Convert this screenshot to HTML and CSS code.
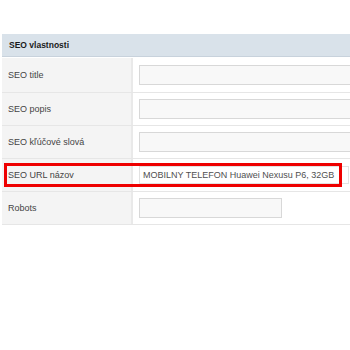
FILE: index.html
```html
<!DOCTYPE html>
<html lang="sk">
<head>
    <meta charset="UTF-8">
    <title>SEO vlastnosti</title>
    <link rel="stylesheet" href="styles.css">
</head>
<body>
    <div class="panel">
        <div class="panel-head">SEO vlastnosti</div>

        <div class="prop-row prop-row-first">
            <div class="prop-label">SEO title</div>
            <div class="prop-value"><input class="field field-wide" type="text"></div>
        </div>
        <div class="prop-row">
            <div class="prop-label">SEO popis</div>
            <div class="prop-value"><input class="field field-wide" type="text"></div>
        </div>
        <div class="prop-row">
            <div class="prop-label">SEO kľúčové slová</div>
            <div class="prop-value"><input class="field field-wide" type="text"></div>
        </div>
        <div class="prop-row">
            <div class="prop-label">SEO URL názov</div>
            <div class="prop-value"><input class="field field-url" type="text" value="MOBILNY TELEFON Huawei Nexusu P6, 32GB"></div>
            <div class="highlight-box"></div>
        </div>
        <div class="prop-row">
            <div class="prop-label">Robots</div>
            <div class="prop-value"><input class="field field-short" type="text"></div>
        </div>
    </div>
</body>
</html>
```

FILE: styles.css
```css
* {
    box-sizing: border-box;
    margin: 0;
    padding: 0;
}

body {
    font-family: "Liberation Sans", Arial, sans-serif;
    background: #ffffff;
    color: #444444;
    height: 350px;
    overflow: hidden;
}

.panel {
    margin: 34px 0 0 2px;
}

.panel-head {
    height: 23px;
    display: flex;
    align-items: center;
    padding-left: 7px;
    background: #d9e2ea;
    border-bottom: 1px solid #c8d2dc;
    font-size: 8.5px;
    font-weight: bold;
    color: #1a1a1a;
    margin-bottom: 1px;
}

.prop-row {
    position: relative;
    display: grid;
    grid-template-columns: 131px 1fr;
    height: 33px;
    border-bottom: 1px solid #e6e6e6;
}

.prop-row-first {
    height: 35px;
}

.prop-label {
    display: flex;
    align-items: center;
    padding-left: 6px;
    background: #f4f4f4;
    border-right: 2px solid #e9e9e9;
    font-size: 9px;
    color: #444444;
}

.prop-value {
    display: flex;
    align-items: center;
    padding-left: 6px;
    overflow: hidden;
}

.field {
    flex: none;
    height: 20px;
    border: 1px solid #d8d8d8;
    background: #f8f8f8;
    font-family: inherit;
    font-size: 9px;
    color: #505050;
    padding: 0 3px;
    outline: none;
}

.field-wide {
    width: 260px;
}

.field-url {
    width: 210px;
    height: 18px;
    background: #ffffff;
    border-color: #e2e2e2;
}

.field-short {
    width: 143px;
}

/* red annotation frame over the URL row */
.highlight-box {
    position: absolute;
    left: 2px;
    top: 4px;
    width: 338px;
    height: 24px;
    border: 3px solid #ee0000;
    pointer-events: none;
}
```
